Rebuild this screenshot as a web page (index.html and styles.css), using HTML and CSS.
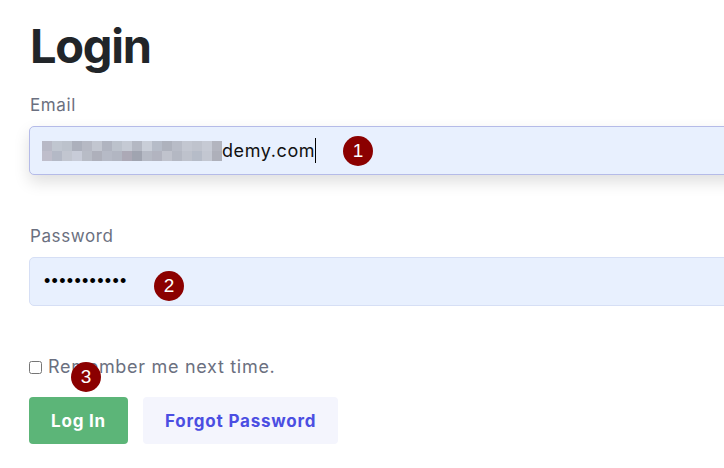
FILE: index.html
```html
<!DOCTYPE html>
<html lang="en">
<head>
    <meta charset="UTF-8">
    <meta name="viewport" content="width=device-width, initial-scale=1.0">
    <title>Login</title>
    <link rel="stylesheet" href="styles.css">
</head>
<body>
    <div class="login">
        <h1>Login</h1>

        <form class="login-form">
            <label class="field-label" for="email">Email</label>
            <div class="field field-focus" id="email">
                <span class="masked"></span><span class="field-text">demy.com</span><span class="caret"></span>
                <span class="step step-1">1</span>
            </div>

            <label class="field-label label-password" for="password">Password</label>
            <div class="field" id="password">
                <span class="dots">&bull;&bull;&bull;&bull;&bull;&bull;&bull;&bull;&bull;&bull;&bull;</span>
                <span class="step step-2">2</span>
            </div>

            <div class="remember">
                <input type="checkbox" id="remember">
                <label for="remember">Remember me next time.</label>
                <span class="step step-3">3</span>
            </div>

            <div class="actions">
                <button type="submit" class="btn btn-login">Log In</button>
                <button type="button" class="btn btn-forgot">Forgot Password</button>
            </div>
        </form>
    </div>
</body>
</html>
```

FILE: styles.css
```css
body {
    margin: 0;
    padding: 0 0 0 29px;
    font-family: "Inter", sans-serif;
    background-color: #fff;
    overflow: hidden;
}

.login {
    width: 760px;
}

h1 {
    margin: 18px 0 0 1px;
    font-size: 47px;
    line-height: 56px;
    font-weight: 700;
    color: #212529;
    letter-spacing: -1.3px;
}

.login-form {
    display: flex;
    flex-direction: column;
}

.field-label {
    display: block;
    margin: 19px 0 9px 1px;
    font-size: 17px;
    line-height: 24px;
    letter-spacing: 0.6px;
    color: #6b7080;
}

.label-password {
    margin-top: 49px;
}

.field {
    position: relative;
    display: flex;
    align-items: center;
    height: 49px;
    box-sizing: border-box;
    padding: 0 12px;
    background-color: #e8f0fe;
    border: 1px solid #d6dff5;
    border-radius: 5px;
}

.field-focus {
    border-color: #b5bbe8;
    box-shadow: 0 7px 16px rgba(0, 0, 0, 0.13);
}

/* blurred address */
.masked {
    display: inline-block;
    width: 180px;
    height: 20px;
    background-image:
        linear-gradient(90deg,
            #b8b9c6 0 10px, #c0c6d0 10px 20px, #bcc2cc 20px 30px, #acb0bc 30px 40px,
            #b6b9c4 40px 50px, #c2c6d0 50px 60px, #b0b4c0 60px 70px, #bcc2cc 70px 80px,
            #c5cad4 80px 90px, #b4b8c3 90px 100px, #c9ced8 100px 110px, #b6bcc8 110px 120px,
            #aeb2bd 120px 130px, #b8bcc7 130px 140px, #c3c7d1 140px 150px, #bfc3cd 150px 160px,
            #c6cad4 160px 170px, #b3b5bf 170px 180px),
        linear-gradient(90deg,
            #bfbecb 0 10px, #b4b9c6 10px 20px, #c2c6d0 20px 30px, #c8ccd8 30px 40px,
            #b8bcc6 40px 50px, #aeb0bb 50px 60px, #b6bac6 60px 70px, #b2b6c2 70px 80px,
            #aca9b6 80px 90px, #a0a4b0 90px 100px, #b6bac5 100px 110px, #b2b4c0 110px 120px,
            #c0c3cd 120px 130px, #b4b8c3 130px 140px, #bec2cc 140px 150px, #b6bcc8 150px 160px,
            #c3c7d1 160px 170px, #aeb0ba 170px 180px);
    background-size: 180px 10px, 180px 10px;
    background-position: 0 0, 0 10px;
    background-repeat: no-repeat;
}

.field-text {
    font-size: 18px;
    letter-spacing: 0.6px;
    color: #111;
}

.caret {
    display: inline-block;
    width: 1px;
    height: 25px;
    background-color: #000;
}

.dots {
    padding-left: 2px;
    font-family: "Liberation Sans", sans-serif;
    font-size: 18px;
    letter-spacing: 1.3px;
    color: #000;
}

/* numbered step markers */
.step {
    position: absolute;
    width: 30px;
    height: 30px;
    border-radius: 50%;
    background-color: #8b0000;
    color: #fff;
    font-family: "Liberation Sans", sans-serif;
    font-size: 19px;
    line-height: 30px;
    letter-spacing: 0;
    text-align: center;
}

.step-1 {
    left: 313px;
    top: 9px;
}

.step-2 {
    left: 124px;
    top: 13px;
}

.step-3 {
    left: 42px;
    top: 7px;
}

.remember {
    position: relative;
    display: flex;
    align-items: center;
    margin-top: 49px;
    font-size: 18px;
    line-height: 24px;
    letter-spacing: 0.7px;
    color: #6b7080;
}

.remember input {
    width: 13px;
    height: 13px;
    margin: 0 6px 0 0;
}

.actions {
    display: flex;
    gap: 15px;
    margin-top: 18px;
}

.btn {
    height: 47px;
    padding: 0 22px;
    border: none;
    border-radius: 4px;
    font-family: "Inter", sans-serif;
    font-size: 17px;
    font-weight: 700;
    letter-spacing: 0.8px;
    cursor: pointer;
}

.btn-login {
    background-color: #5cb578;
    color: #fff;
}

.btn-forgot {
    background-color: #f4f5fd;
    color: #4b4ee2;
}
```
